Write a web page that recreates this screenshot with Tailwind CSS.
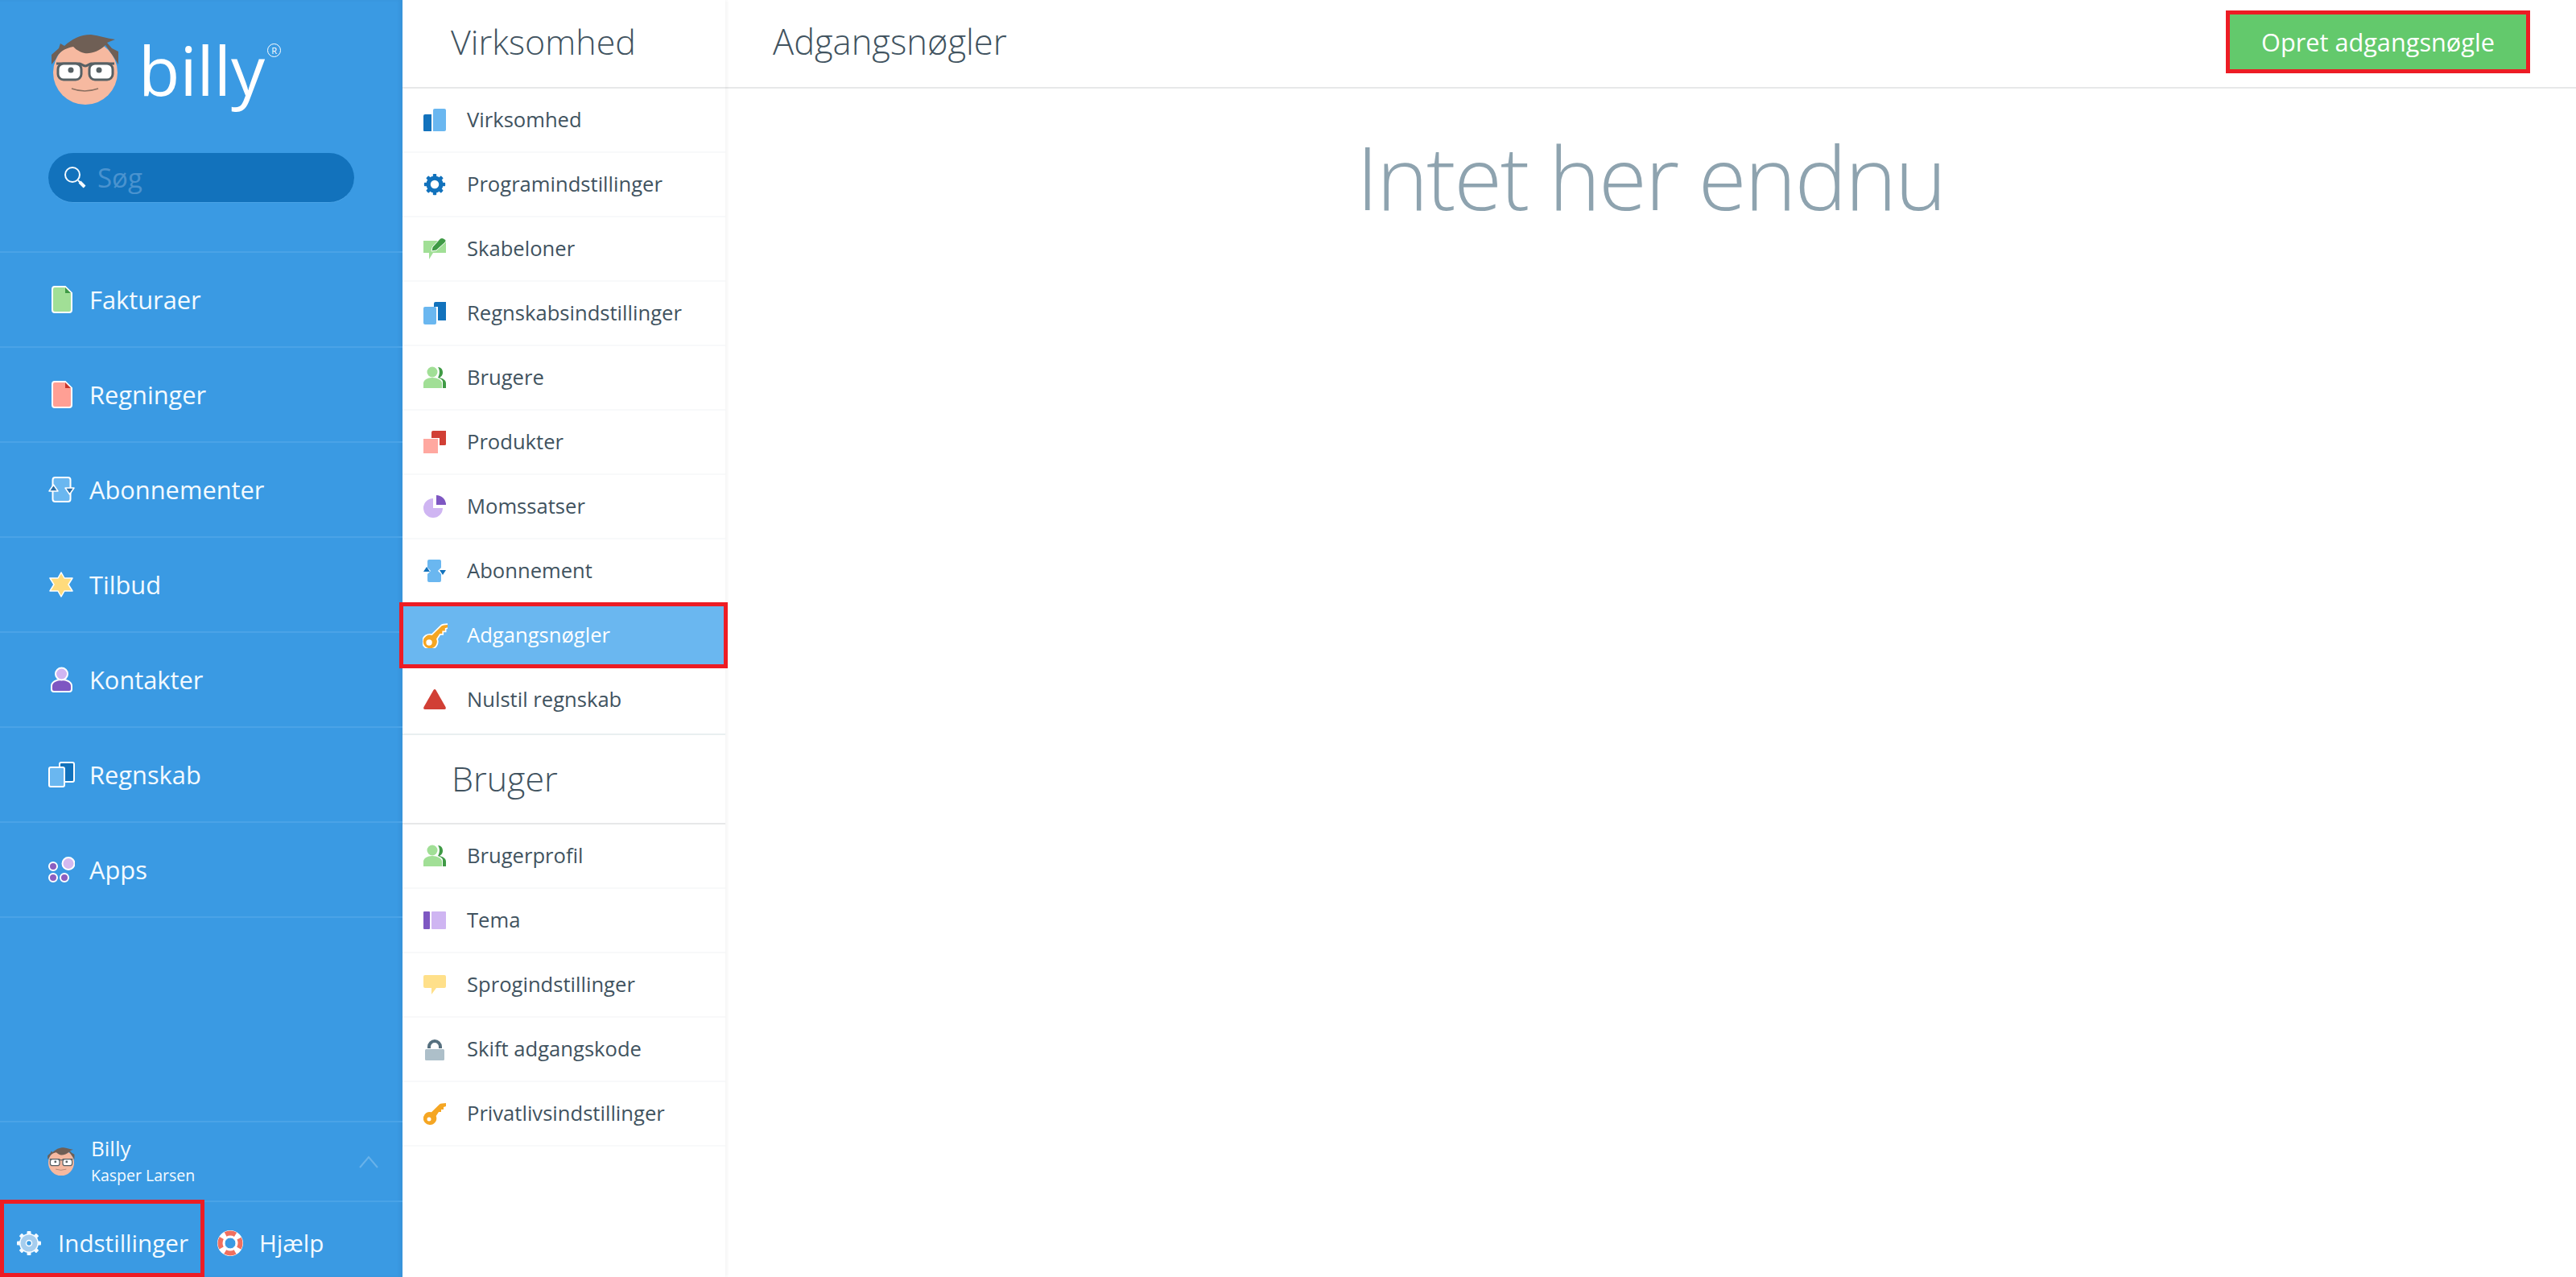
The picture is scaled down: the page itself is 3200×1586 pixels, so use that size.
<!DOCTYPE html>
<html lang="da">
<head>
  <meta charset="UTF-8">
  <title>Billy - Adgangsnøgler</title>
  <script src="https://cdn.jsdelivr.net/npm/@tailwindcss/browser@4"></script>
</head>
<body class="bg-white overflow-hidden font-['Open_Sans',sans-serif]">
  <svg class="hidden">
    <symbol id="face" viewBox="60 38 90 92">
      <circle cx="105" cy="88" r="40" fill="#f6b9a0"/>
      <path d="M63 78 L63 66 L72 58 L74 52 L79 55 C88 47 98 41 112 41 C122 42 132 46 142 47 L132 51 L138 58 L146 62 L146 78 L141 70 L130 54 C122 62 112 65 104 64 C96 62 92 58 90 56 C80 58 72 62 68 72 Z" fill="#6f5f55"/>
      <path d="M69 77 H98 C100 77 102 80 105 80 C108 80 110 77 112 77 H141" fill="none" stroke="#566064" stroke-width="3"/>
      <rect x="71" y="77" width="29" height="20" rx="7" fill="#fff" stroke="#566064" stroke-width="3"/>
      <rect x="110" y="77" width="29" height="20" rx="7" fill="#fff" stroke="#566064" stroke-width="3"/>
      <circle cx="87" cy="85" r="3.5" fill="#566064"/>
      <circle cx="122" cy="85" r="3.5" fill="#566064"/>
      <path d="M88 108 Q104 114 121 108" fill="none" stroke="#8b6f60" stroke-width="1.5"/>
    </symbol>
    <symbol id="cog" viewBox="0 0 32 32">
      <g fill="currentColor">
        <rect x="13.500" y="1" width="5" height="30" rx="1"/>
        <rect x="13.500" y="1" width="5" height="30" rx="1" transform="rotate(45 16 16)"/>
        <rect x="13.500" y="1" width="5" height="30" rx="1" transform="rotate(90 16 16)"/>
        <rect x="13.500" y="1" width="5" height="30" rx="1" transform="rotate(135 16 16)"/>
        <circle cx="16" cy="16" r="12"/>
      </g>
    </symbol>
    <symbol id="people" viewBox="0 0 28 28">
      <path d="M18 1 C22 1 24 4 24 8 C24 11 22 13 20 14 C24 15 28 17 28 21 V27 H24 V19 C24 17 21 15 18 14 C20 11 21 5 18 1 Z" fill="#3f9a45"/>
      <circle cx="11" cy="7" r="6.5" fill="#a1df96"/>
      <path d="M0 27 V21 C0 17 5 14 11 14 C17 14 23 17 23 21 V27 Z" fill="#a1df96"/>
    </symbol>
    <symbol id="key" viewBox="0 0 28 28">
      <path d="M8 28 A8 8 0 1 1 10 12.300 L20 2.500 Q22 1 28 1 V5 L25 6 V9 H22 V12 H19 L15.700 17 A8 8 0 0 1 8 28 Z" fill="currentColor"/>
      <circle cx="7" cy="21" r="2.500" fill="#fff"/>
    </symbol>
  </svg>

  <div class="flex h-[1586px] w-[3200px]">
    <!-- Main sidebar -->
    <aside class="flex w-[500px] shrink-0 flex-col bg-[#3a9ae3] text-[#f4faff] shadow-[inset_-4px_0_4px_rgba(0,0,0,0.04)]">
      <div class="relative h-[314px] shrink-0 border-b-2 border-[#4aa3e7]">
        <div class="flex h-[190px] items-start pl-[61px] pt-[40px]">
          <svg class="h-[92px] w-[90px]"><use href="#face"/></svg>
          <span class="ml-[21px] mt-[-11px] text-[84px] leading-[116px] text-white">billy</span>
          <span class="ml-[3px] mt-[14px] flex h-[17px] w-[17px] items-center justify-center rounded-full border border-white text-[11px] leading-none text-white">R</span>
        </div>
        <div class="mx-[60px] flex h-[62px] items-center rounded-full border-b border-[#4aa3e7] bg-[#1272bc] pl-[18px]">
          <svg class="h-[30px] w-[30px]" viewBox="0 0 30 30" fill="none" stroke="#f4faff"><circle cx="12" cy="11" r="9" stroke-width="2"/><path d="M19 18 L27 26" stroke-width="2"/><path d="M21 20 L27 26" stroke-width="4"/></svg>
          <span class="ml-[13px] text-[33px] leading-none text-[#4a93cf]">Søg</span>
        </div>
      </div>

      <nav class="flex flex-col text-[30.800px] leading-none">
        <a class="flex h-[118px] items-center border-b-2 border-[#4aa3e7] pl-[64px]">
          <svg class="h-[34px] w-[26px]" viewBox="0 0 26 34"><path d="M4 1 H17 L25 9 V30 Q25 33 22 33 H4 Q1 33 1 30 V4 Q1 1 4 1 Z" fill="#a1df96" stroke="#fff" stroke-width="2"/><path d="M17 2 L24 9 H17 Z" fill="#3f9a45"/></svg>
          <span class="ml-[21px]">Fakturaer</span>
        </a>
        <a class="flex h-[118px] items-center border-b-2 border-[#4aa3e7] pl-[64px]">
          <svg class="h-[34px] w-[26px]" viewBox="0 0 26 34"><path d="M4 1 H17 L25 9 V30 Q25 33 22 33 H4 Q1 33 1 30 V4 Q1 1 4 1 Z" fill="#ff9f94" stroke="#fff" stroke-width="2"/><path d="M17 2 L24 9 H17 Z" fill="#c9352b"/></svg>
          <span class="ml-[21px]">Regninger</span>
        </a>
        <a class="flex h-[118px] items-center border-b-2 border-[#4aa3e7] pl-[60px]">
          <svg class="h-[32px] w-[33px]" viewBox="0 0 33 32"><rect x="5.500" y="1" width="22" height="30" rx="3" fill="#6ab7f0" stroke="#fff" stroke-width="2"/><path d="M1 18 L6.500 10 L12 18 Z" fill="#2a6fa8" stroke="#fff" stroke-width="1.500" stroke-linejoin="round"/><path d="M21 14 H32 L26.500 22 Z" fill="#2a6fa8" stroke="#fff" stroke-width="1.500" stroke-linejoin="round"/></svg>
          <span class="ml-[18px]">Abonnementer</span>
        </a>
        <a class="flex h-[118px] items-center border-b-2 border-[#4aa3e7] pl-[61px]">
          <svg class="h-[32px] w-[30px]" viewBox="0 0 30 32"><path d="M15 1 L19 8 L29 8 L24 16 L29 24 L19 24 L15 31 L11 24 L1 24 L6 16 L1 8 L11 8 Z" fill="#ffdb7c" stroke="#fff" stroke-width="1.500" stroke-linejoin="round"/></svg>
          <span class="ml-[20px]">Tilbud</span>
        </a>
        <a class="flex h-[118px] items-center border-b-2 border-[#4aa3e7] pl-[63px]">
          <svg class="h-[32px] w-[27px]" viewBox="0 0 27 32"><path d="M1 28 V24 C1 19 7 16 13.500 16 C20 16 26 19 26 24 V28 Q26 31 23 31 H4 Q1 31 1 28 Z" fill="#7e57c2" stroke="#fff" stroke-width="2"/><circle cx="13.500" cy="9" r="7.500" fill="#cfb5f2" stroke="#fff" stroke-width="2"/></svg>
          <span class="ml-[21px]">Kontakter</span>
        </a>
        <a class="flex h-[118px] items-center border-b-2 border-[#4aa3e7] pl-[60px]">
          <svg class="h-[32px] w-[33px]" viewBox="0 0 33 32"><rect x="14" y="1" width="18" height="24" rx="2" fill="#1272bc" stroke="#fff" stroke-width="2"/><rect x="1" y="7" width="19" height="24" rx="2" fill="#6ab7f0" stroke="#fff" stroke-width="2"/></svg>
          <span class="ml-[18px]">Regnskab</span>
        </a>
        <a class="flex h-[118px] items-center border-b-2 border-[#4aa3e7] pl-[60px]">
          <svg class="h-[32px] w-[33px]" viewBox="0 0 33 32" stroke="#fff" stroke-width="2" fill="#8b5fc0"><circle cx="25" cy="8.500" r="7.500" fill="#d3b9f0"/><circle cx="6" cy="12" r="5"/><circle cx="6" cy="26" r="5"/><circle cx="20" cy="26" r="5"/></svg>
          <span class="ml-[18px]">Apps</span>
        </a>
      </nav>

      <div class="relative mt-auto">
        <div class="flex h-[101px] items-center border-y-2 border-[#4aa3e7] pl-[58px]">
          <svg class="h-[37px] w-[36px]"><use href="#face"/></svg>
          <div class="ml-[19px] flex flex-col">
            <span class="text-[26px] leading-[33px]">Billy</span>
            <span class="text-[19.500px] leading-[33px]">Kasper Larsen</span>
          </div>
          <svg class="ml-auto mr-[30px] h-[16px] w-[24px]" viewBox="0 0 24 16" fill="none" stroke="#68b2ea" stroke-width="2"><path d="M1 15 L12 2 L23 15"/></svg>
        </div>
        <div class="flex h-[93px] items-center pt-[8px]">
          <a class="flex w-[254px] items-center pl-[20px]">
            <svg class="h-[32px] w-[32px] text-[#f4faff]"><use href="#cog"/><circle cx="16" cy="16" r="10.500" fill="#a5cdee"/><circle cx="16" cy="16" r="3.500" fill="#3a9ae3" stroke="#fff" stroke-width="1.500"/></svg>
            <span class="ml-[20px] text-[29.600px] leading-none">Indstillinger</span>
          </a>
          <a class="ml-[16px] flex items-center">
            <svg class="h-[32px] w-[32px]" viewBox="0 0 32 32"><circle cx="16" cy="16" r="16" fill="#fff"/><circle cx="16" cy="16" r="12.500" fill="none" stroke="#f0705f" stroke-width="6" stroke-dasharray="13 6.630" stroke-dashoffset="6.500"/><circle cx="16" cy="16" r="7" fill="#3a9ae3" stroke="#fff" stroke-width="1"/></svg>
            <span class="ml-[20px] text-[29.600px] leading-none">Hjælp</span>
          </a>
        </div>
        <div class="absolute bottom-0 left-0 h-[96px] w-[254px] border-[5px] border-[#ed1c24]"></div>
      </div>
    </aside>

    <!-- Settings menu -->
    <div class="relative z-10 flex w-[401px] shrink-0 flex-col bg-white text-[#41535f] shadow-[2px_0_4px_rgba(0,0,0,0.05)]">
      <h2 class="flex h-[110px] shrink-0 items-center border-b-2 border-[#e7e8e9] pb-[6px] pl-[60px] text-[43px] font-light leading-none">Virksomhed</h2>
      <ul class="text-[25.600px] leading-none">
        <li class="flex h-[80px] items-center border-b-2 border-[#f8f9fa] pl-[26px]">
          <svg class="h-[28px] w-[28px]" viewBox="0 0 28 28"><path d="M0 9 Q0 7 2 7 H10 V28 H1 Q0 28 0 27 Z" fill="#1272bc"/><path d="M12 2 Q12 0 14 0 H26 Q28 0 28 2 V26 Q28 28 26 28 H12 Z" fill="#6ab7f0"/></svg>
          <span class="ml-[26px]">Virksomhed</span>
        </li>
        <li class="flex h-[80px] items-center border-b-2 border-[#f8f9fa] pl-[26px]">
          <svg class="h-[28px] w-[28px] text-[#1272bc]" viewBox="0 0 32 32"><use href="#cog"/><circle cx="16" cy="16" r="6" fill="#fff"/></svg>
          <span class="ml-[26px]">Programindstillinger</span>
        </li>
        <li class="flex h-[80px] items-center border-b-2 border-[#f8f9fa] pl-[26px]">
          <svg class="h-[28px] w-[28px]" viewBox="0 0 28 28"><path d="M0 4 H28 V19 H12 L7 27 V19 H0 Z" fill="#a1df96"/><path d="M10 17 L11 12 L21 1 Q23 0 25 1 L28 3 Q28 5 27 6 L16 16 Z" fill="#3f9a45" stroke="#fff"/></svg>
          <span class="ml-[26px]">Skabeloner</span>
        </li>
        <li class="flex h-[80px] items-center border-b-2 border-[#f8f9fa] pl-[26px]">
          <svg class="h-[28px] w-[28px]" viewBox="0 0 28 28"><path d="M13 2 Q13 0 15 0 H28 V23 H18 V6 H13 Z" fill="#1272bc"/><rect x="0" y="6" width="16" height="22" rx="2" fill="#6ab7f0"/></svg>
          <span class="ml-[26px]">Regnskabsindstillinger</span>
        </li>
        <li class="flex h-[80px] items-center border-b-2 border-[#f8f9fa] pl-[26px]">
          <svg class="h-[28px] w-[28px]"><use href="#people"/></svg>
          <span class="ml-[26px]">Brugere</span>
        </li>
        <li class="flex h-[80px] items-center border-b-2 border-[#f8f9fa] pl-[26px]">
          <svg class="h-[28px] w-[28px]" viewBox="0 0 28 28"><path d="M10 2 Q10 0 12 0 H28 V17 Q28 18 26 18 H20 V9 H10 Z" fill="#d13f35"/><rect x="0" y="10" width="18" height="18" fill="#ffa8a0"/></svg>
          <span class="ml-[26px]">Produkter</span>
        </li>
        <li class="flex h-[80px] items-center border-b-2 border-[#f8f9fa] pl-[26px]">
          <svg class="h-[28px] w-[28px]" viewBox="0 0 28 28"><path d="M12 4 A12 12 0 1 0 24 16 H12 Z" fill="#cfb5f2"/><path d="M16 0 A12 12 0 0 1 28 12 H16 Z" fill="#7e57c2"/></svg>
          <span class="ml-[26px]">Momssatser</span>
        </li>
        <li class="flex h-[80px] items-center border-b-2 border-[#f8f9fa] pl-[26px]">
          <svg class="h-[28px] w-[28px]" viewBox="0 0 28 28"><path d="M5 2 Q5 0 7 0 H20 Q22 0 22 2 V10 L18 14 L22 18 V26 Q22 28 20 28 H7 Q5 28 5 26 V18 L9 14 L5 10 Z" fill="#6ab7f0"/><path d="M0 15 L4 9 L8 15 Z" fill="#1272bc"/><path d="M20 13 H28 L24 19 Z" fill="#1272bc"/></svg>
          <span class="ml-[26px]">Abonnement</span>
        </li>
        <li class="relative flex h-[80px] items-center bg-[#6ab7f0] pb-[2px] pl-[24px] text-white">
          <svg class="h-[32px] w-[32px] text-[#f5a623]" viewBox="-1 -1 30 30"><use href="#key" stroke="#fff" stroke-width="1.500"/></svg>
          <span class="ml-[24px]">Adgangsnøgler</span>
          <div class="absolute -left-[4px] -right-[3px] -top-[2px] bottom-0 border-[5px] border-[#ed1c24]"></div>
        </li>
        <li class="flex h-[81px] items-center pb-[3px] pl-[26px]">
          <svg class="h-[28px] w-[28px]" viewBox="0 0 28 28"><path d="M12.500 2 Q14 0 15.500 2 L27.500 23 Q28.500 26 26 26 H2 Q-0.500 26 0.500 23 Z" fill="#d13f35"/></svg>
          <span class="ml-[26px]">Nulstil regnskab</span>
        </li>
      </ul>
      <h2 class="flex h-[113px] shrink-0 items-center border-y-2 border-t-[#e9eff0] border-b-[#e7e8e9] pb-[2px] pl-[61px] text-[43px] font-light leading-none">Bruger</h2>
      <ul class="text-[25.600px] leading-none">
        <li class="flex h-[80px] items-center border-b-2 border-[#f8f9fa] pl-[26px]">
          <svg class="h-[28px] w-[28px]"><use href="#people"/></svg>
          <span class="ml-[26px]">Brugerprofil</span>
        </li>
        <li class="flex h-[80px] items-center border-b-2 border-[#f8f9fa] pl-[26px]">
          <svg class="h-[22px] w-[28px]" viewBox="0 0 28 22"><rect width="8" height="22" rx="1" fill="#7e57c2"/><rect x="10" width="18" height="22" rx="1" fill="#cfb5f2"/></svg>
          <span class="ml-[26px]">Tema</span>
        </li>
        <li class="flex h-[80px] items-center border-b-2 border-[#f8f9fa] pl-[26px]">
          <svg class="h-[24px] w-[28px]" viewBox="0 0 28 24"><path d="M2 0 H26 Q28 0 28 2 V14 Q28 16 26 16 H16 L10 24 V16 H2 Q0 16 0 14 V2 Q0 0 2 0 Z" fill="#ffe08a"/></svg>
          <span class="ml-[26px]">Sprogindstillinger</span>
        </li>
        <li class="flex h-[80px] items-center border-b-2 border-[#f8f9fa] pl-[28px]">
          <svg class="h-[28px] w-[24px]" viewBox="0 0 24 28"><path d="M5 13 V11 A7 7 0 0 1 19 11 V13" fill="none" stroke="#56707f" stroke-width="4"/><rect y="14" width="24" height="14" rx="1.500" fill="#adbfc9"/></svg>
          <span class="ml-[28px]">Skift adgangskode</span>
        </li>
        <li class="flex h-[80px] items-center border-b-2 border-[#f8f9fa] pl-[26px]">
          <svg class="h-[28px] w-[28px] text-[#f5a623]"><use href="#key"/></svg>
          <span class="ml-[26px]">Privatlivsindstillinger</span>
        </li>
      </ul>
    </div>

    <!-- Content -->
    <main class="flex min-w-0 flex-1 flex-col">
      <header class="flex h-[110px] shrink-0 items-start justify-between border-b-2 border-[#e7e8e9] pl-[59px] pr-[57px]">
        <h1 class="mt-[26px] text-[43.500px] font-light leading-[52px] text-[#41535f]">Adgangsnøgler</h1>
        <button class="mt-[13px] flex h-[78px] w-[378px] items-center justify-center border-[5px] border-[#ed1c24] bg-[#63c96c] text-[30.700px] leading-none text-white">Opret adgangsnøgle</button>
      </header>
      <p class="mt-[39px] text-center text-[109px] font-light leading-[140px] tracking-[-2.300px] text-[#8ea3af]">Intet her endnu</p>
    </main>
  </div>
</body>
</html>
